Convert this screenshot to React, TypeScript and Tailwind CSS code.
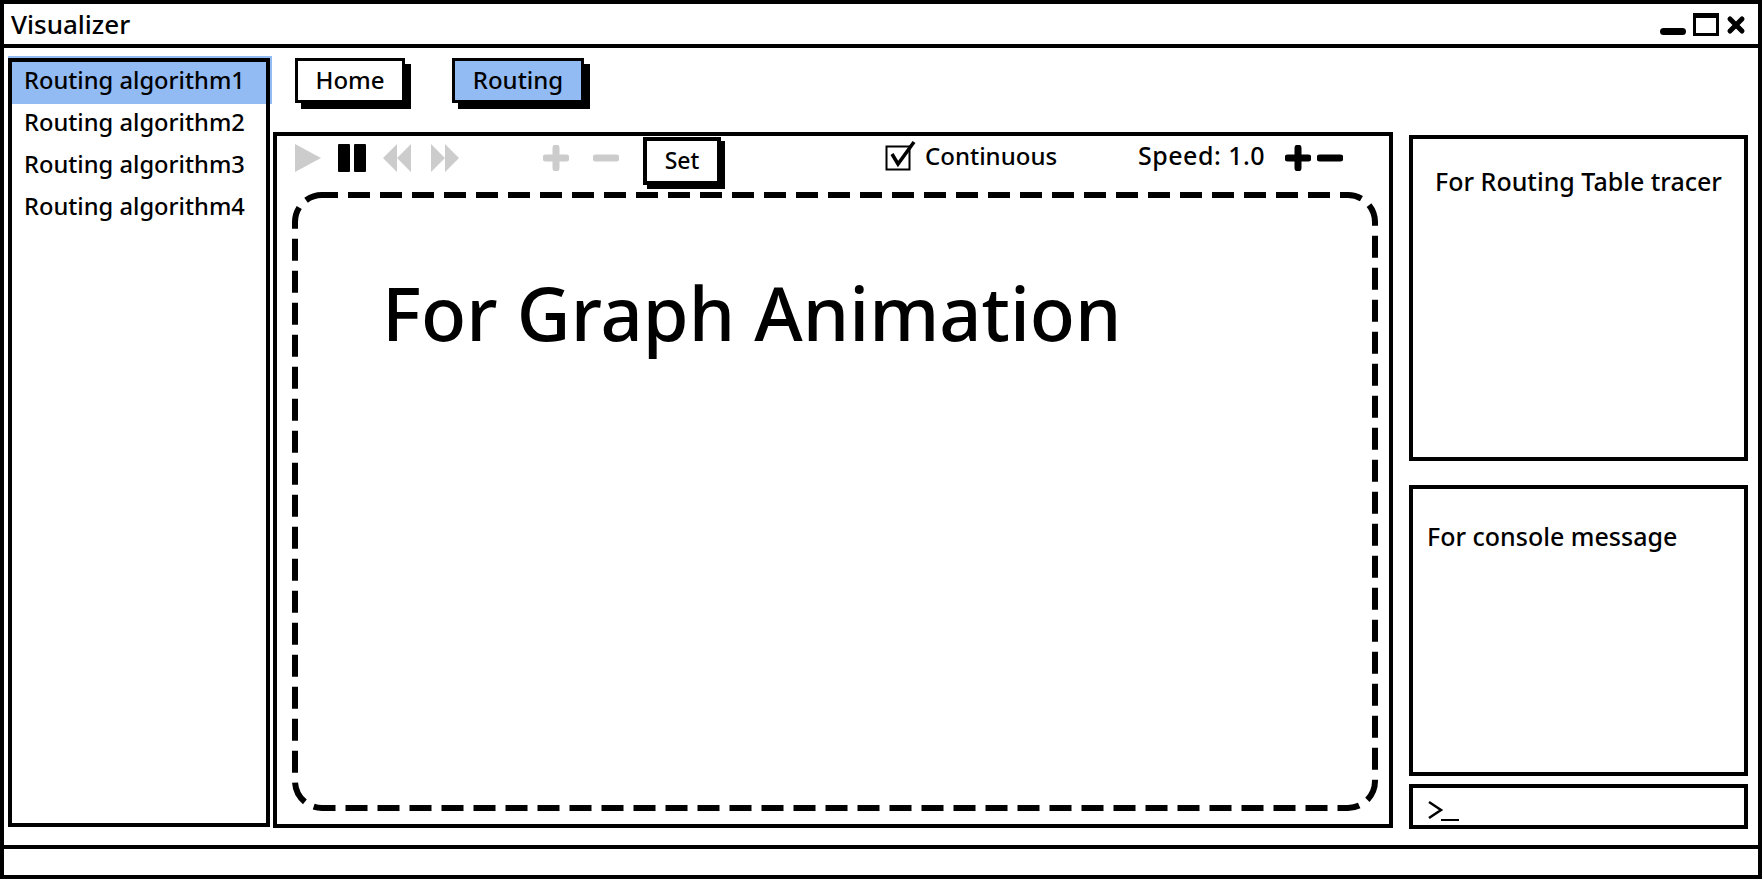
import { X } from 'lucide-react';

const algorithms = ['Routing algorithm1', 'Routing algorithm2', 'Routing algorithm3', 'Routing algorithm4'];

function Play({ color }: { color: string }) {
  return (
    <svg width="26" height="28" viewBox="0 0 26 28" className="block">
      <path d="M0 0 L26 14 L0 28 Z" fill={color} />
    </svg>
  );
}

function Pause() {
  return (
    <svg width="28" height="28" viewBox="0 0 28 28" className="block">
      <rect x="0" y="0" width="12" height="28" rx="1" fill="#000" />
      <rect x="16" y="0" width="12" height="28" rx="1" fill="#000" />
    </svg>
  );
}

function Rewind() {
  return (
    <svg width="28" height="28" viewBox="0 0 28 28" className="block">
      <path d="M14 0 V28 L0 14 Z M28 0 V28 L14 14 Z" fill="#ccc" />
    </svg>
  );
}

function Forward() {
  return (
    <svg width="28" height="28" viewBox="0 0 28 28" className="block">
      <path d="M0 0 V28 L14 14 Z M14 0 V28 L28 14 Z" fill="#ccc" />
    </svg>
  );
}

function Plus({ color }: { color: string }) {
  return (
    <svg width="26" height="26" viewBox="0 0 26 26" className="block">
      <path d="M13 3 V23 M3 13 H23" stroke={color} strokeWidth="7" strokeLinecap="round" />
    </svg>
  );
}

function Minus({ color }: { color: string }) {
  return (
    <svg width="26" height="26" viewBox="0 0 26 26" className="block">
      <path d="M3 13 H23" stroke={color} strokeWidth="7" strokeLinecap="round" />
    </svg>
  );
}

export default function App() {
  return (
    <div className="h-[880px] w-[1764px] bg-white pr-[2px] pb-px font-['Noto_Sans',sans-serif] text-black">
      <div className="flex h-full flex-col border-4 border-black">
        {/* Title bar */}
        <div className="flex h-[44px] shrink-0 items-center border-b-4 border-black pl-[7px]">
          <span className="text-[26px] leading-none font-medium">Visualizer</span>
          <div className="ml-auto flex items-end pr-[10px]">
            <div className="mb-[1px] h-[7px] w-[26px] rounded-sm bg-black" />
            <div className="ml-[7px] h-[23px] w-[26px] border-[3px] border-t-[5px] border-black" />
            <X size={24} strokeWidth={5} className="mb-[-1px] ml-[5px]" />
          </div>
        </div>

        {/* Body */}
        <div className="flex min-h-0 flex-1 pt-[10px] pl-[4px]">
          <div className="relative h-[769px] w-[262px] shrink-0">
            <div className="absolute -top-[2px] -right-[2px] left-0 h-[48px] bg-[#92bbf3]" />
            <div className="relative h-full border-4 border-black bg-white">
              {algorithms.map((name, i) => (
                <div
                  key={name}
                  className={`flex h-[42px] items-center pb-[4px] pl-[12px] text-[23.7px] leading-none font-medium ${i === 0 ? 'bg-[#92bbf3]' : ''}`}
                >
                  {name}
                </div>
              ))}
            </div>
          </div>

          <div className="flex flex-col pl-[3px]">
            {/* Tabs */}
            <div className="flex h-[74px] shrink-0 items-start pl-[22px]">
              <button className="flex h-[45px] w-[110px] items-center justify-center border-[3px] border-black bg-white pb-[2px] text-[24px] leading-none font-medium shadow-[6px_6px_0_#000]">
                Home
              </button>
              <button className="ml-[47px] flex h-[45px] w-[132px] items-center justify-center border-[3px] border-black bg-[#92bbf3] pb-[2px] text-[24px] leading-none font-medium shadow-[6px_6px_0_#000]">
                Routing
              </button>
            </div>

            <div className="flex">
              {/* Graph panel */}
              <div className="h-[696px] w-[1120px] shrink-0 border-4 border-black">
                <div className="flex h-[58px] items-center pb-[10px] pl-[18px]">
                  <div className="mt-[-5px] flex items-center">
                    <Play color="#ccc" />
                    <div className="ml-[17px]"><Pause /></div>
                    <div className="ml-[17px]"><Rewind /></div>
                    <div className="ml-[20px]"><Forward /></div>
                    <div className="ml-[84px]"><Plus color="#ccc" /></div>
                    <div className="ml-[24px]"><Minus color="#ccc" /></div>
                  </div>
                  <button className="ml-[24px] mt-[1px] flex h-[48px] w-[78px] shrink-0 items-center justify-center border-[4px] border-black bg-white text-[23px] leading-none font-medium shadow-[4px_4px_0_#000]">
                    Set
                  </button>
                  <div className="ml-[164px] mt-[-9px] flex w-[253px] items-center">
                    <svg width="32" height="30" viewBox="0 0 32 30" className="block">
                      <rect x="1.5" y="5.5" width="23" height="23" fill="none" stroke="#000" strokeWidth="2" />
                      <path d="M7 13 L13 23 L29 1" fill="none" stroke="#000" strokeWidth="3.5" />
                    </svg>
                    <span className="ml-[8px] text-[24px] leading-none font-medium">Continuous</span>
                  </div>
                  <span className="mt-[-9px] w-[147px] text-[25px] leading-none font-medium tracking-[0.5px]">Speed: 1.0</span>
                  <div className="mt-[-5px] flex items-center">
                    <Plus color="#000" />
                    <div className="ml-[6px]"><Minus color="#000" /></div>
                  </div>
                </div>

                <div className="relative ml-[17px] h-[616px] w-[1083px] pt-[74px] pl-[88px]">
                  <svg width="1083" height="616" className="absolute top-0 left-0 overflow-visible" fill="none">
                    <rect x="1" y="1" width="1080" height="613" rx="27" stroke="#000" strokeWidth="6" strokeDasharray="22 10" strokeDashoffset="6" />
                  </svg>
                  <span className="block text-[74px] leading-[90px] font-medium">For Graph Animation</span>
                </div>
              </div>

              {/* Right column */}
              <div className="ml-[16px] flex w-[339px] shrink-0 flex-col pt-[3px]">
                <div className="h-[326px] border-4 border-black pt-[24px] text-center text-[25px] leading-[36px] font-medium">
                  For Routing Table tracer
                </div>
                <div className="mt-[24px] h-[291px] border-4 border-black pt-[29px] pl-[14px] text-[25px] leading-[36px] font-medium">
                  For console message
                </div>
                <div className="mt-[8px] flex h-[45px] items-end border-4 border-black pb-[3px] pl-[15px]">
                  <svg width="32" height="22" viewBox="0 0 32 22" className="block">
                    <path d="M1 2 L13 10 L1 18" fill="none" stroke="#000" strokeWidth="2.5" />
                    <path d="M13 20 H31" fill="none" stroke="#000" strokeWidth="2" />
                  </svg>
                </div>
              </div>
            </div>
          </div>
        </div>

        {/* Status bar */}
        <div className="h-[30px] shrink-0 border-t-4 border-black" />
      </div>
    </div>
  );
}
